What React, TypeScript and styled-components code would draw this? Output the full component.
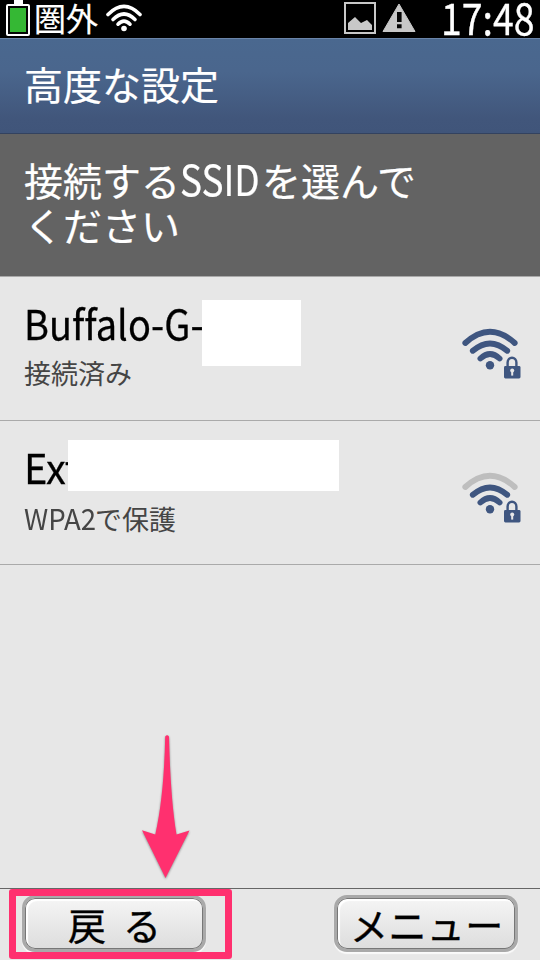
import React from 'react';
import styled, { createGlobalStyle } from 'styled-components';

const Global = createGlobalStyle`
  * { box-sizing: border-box; }
  html, body { margin: 0; padding: 0; }
  body {
    background: #e7e7e7;
    font-family: 'Noto Sans CJK JP', 'Noto Sans', sans-serif;
    font-variant-ligatures: none;
    overflow: hidden;
  }
`;

const Screen = styled.div`
  position: relative;
  display: flex;
  flex-direction: column;
  width: 540px;
  height: 960px;
  overflow: hidden;
  background: #e7e7e7;
`;

const StatusBar = styled.div`
  display: flex;
  flex: none;
  justify-content: space-between;
  height: 38px;
  padding: 0 4px 0 6px;
  background: #000;
  color: #fff;
  svg { display: block; flex: none; }
`;

const StatusGroup = styled.div`
  display: flex;
  height: 38px;
`;

const Carrier = styled.span`
  width: 72px;
  padding-left: 4px;
  font-size: 32px;
  line-height: 34px;
  white-space: nowrap;
  -webkit-text-stroke: 0.2px currentColor;
`;

/* Latin runs are larger and narrower than the kana beside them. */
const Condensed = styled.span<{ $size: number; $width: number; $scale: number }>`
  display: inline-block;
  width: ${(p) => p.$width}px;
  font-size: ${(p) => p.$size}px;
  line-height: inherit;
  white-space: nowrap;
  transform: scaleX(${(p) => p.$scale});
  transform-origin: 0 50%;
`;

const Clock = styled.div`
  margin-left: 25px;
  line-height: 33px;
  -webkit-text-stroke: 0.3px currentColor;
`;

const Header = styled.h1`
  flex: none;
  height: 96px;
  margin: 0;
  padding: 0 24px;
  border-top: 1px solid #6a84a8;
  border-bottom: 1px solid #33425f;
  background: linear-gradient(#4a688f, #4a668d 35%, #41567b 85%, #40557a);
  color: #fff;
  font-size: 39px;
  font-weight: 400;
  line-height: 89px;
  -webkit-text-stroke: 0.2px currentColor;
`;

const Prompt = styled.p`
  flex: none;
  height: 143px;
  margin: 0;
  padding: 21px 24px 0;
  border-bottom: 1px solid #a9a9a9;
  background: #636363;
  color: #fff;
  font-size: 39px;
  line-height: 46px;
  white-space: nowrap;
  -webkit-text-stroke: 0.2px currentColor;
`;

const PromptLine = styled.span`
  display: block;
  height: 46px;
`;

const NetworkList = styled.ul`
  flex: 1;
  margin: 0;
  padding: 0;
  list-style: none;
`;

const NetworkRow = styled.li`
  position: relative;
  display: flex;
  justify-content: space-between;
  height: 144px;
  padding: 21px 18px 0 24px;
  border-bottom: 1px solid #aaa;
`;

const NetworkName = styled.div`
  height: 48px;
  color: #000;
  line-height: 48px;
  -webkit-text-stroke: 0.3px currentColor;
`;

const NetworkState = styled.div`
  margin-top: 9px;
  color: #454545;
  font-size: 27px;
  line-height: 36px;
  white-space: nowrap;
`;

/* White block that hides part of the network name. */
const Redaction = styled.div<{ $x: number; $y: number; $w: number; $h: number }>`
  position: absolute;
  left: ${(p) => p.$x}px;
  top: ${(p) => p.$y}px;
  width: ${(p) => p.$w}px;
  height: ${(p) => p.$h}px;
  background: #fff;
`;

const SignalSvg = styled.svg`
  display: block;
  margin-top: 27px;
`;

const Footer = styled.div`
  display: flex;
  flex: none;
  justify-content: space-between;
  height: 72px;
  padding: 6px 22px 0 22px;
  border-top: 1px solid #666;
`;

const SoftKey = styled.button<{ $spacing: number; $indent: number }>`
  width: 184px;
  height: 57px;
  margin: 0;
  padding: 0 0 0 ${(p) => p.$indent}px;
  border: 3px solid #a9a9a9;
  border-radius: 13px;
  background: linear-gradient(#f5f5f5, #ddd) padding-box, #a9a9a9;
  box-shadow: inset 0 0 0 1px #777, inset 2px 2px 1px 1px #fff, 0 2px 1px #fafafa;
  color: #000;
  font-family: inherit;
  font-size: 38px;
  letter-spacing: ${(p) => p.$spacing}px;
  line-height: 48px;
  text-align: left;
  white-space: nowrap;
  -webkit-text-stroke: 0.4px currentColor;
`;

const Highlight = styled.div`
  position: absolute;
  left: 9px;
  top: 889px;
  width: 223px;
  height: 70px;
  border: 7px solid #ff306f;
  border-radius: 3px;
`;

const Pointer = styled.svg`
  position: absolute;
  left: 136px;
  top: 728px;
  filter: drop-shadow(0 1px 1px rgba(0, 0, 0, 0.4));
`;

const Signal = ({ outer }: { outer: string }) => (
  <SignalSvg width="62" height="54" viewBox="0 0 62 54" fill="none">
    <g stroke="#3f5680" strokeWidth="5.8" strokeLinecap="round">
      <path d="M5.3 18 Q30 -4.5 54.7 18" stroke={outer} />
      <path d="M12.8 25.8 Q30 11 47.2 25.8" />
      <path d="M20.4 33.5 Q30 24.5 39.6 33.5" />
    </g>
    <circle cx="30" cy="40.2" r="4.2" fill="#3f5680" />
    <path d="M47.6 42 V37.5 a4.4 4.7 0 0 1 8.8 0 V42" stroke="#3f5680" strokeWidth="2.4" />
    <rect x="44" y="41" width="16.5" height="12.4" rx="1.4" fill="#3f5680" />
    <circle cx="52.2" cy="45.5" r="2" fill="#e7e7e7" />
    <path d="M51.2 46h2v4.6h-2z" fill="#e7e7e7" />
  </SignalSvg>
);

export default function App() {
  return (
    <>
      <Global />
      <Screen>
        <StatusBar>
          <StatusGroup>
            <svg width="24" height="38" viewBox="0 0 24 38">
              <path d="M8 0h9v4h5a2 2 0 0 1 2 2v28a2 2 0 0 1-2 2H2a2 2 0 0 1-2-2V6a2 2 0 0 1 2-2h6z" fill="#fff" />
              <path d="M2 6h20v28H2z" fill="#050505" />
              <path d="M4 8h16v24H4z" fill="#35b834" />
            </svg>
            <Carrier>圏外</Carrier>
            <svg width="42" height="38" viewBox="102 0 42 38" fill="none">
              <g stroke="#fff" strokeWidth="3.6" strokeLinecap="round">
                <path d="M108 14.5Q124 -1.5 140 14.5" />
                <path d="M113 19.5Q124 8.5 135 19.5" />
                <path d="M118 24.2Q124 18 130 24.2" />
              </g>
              <circle cx="124" cy="28.5" r="2.8" fill="#fff" />
            </svg>
          </StatusGroup>
          <StatusGroup>
            <svg width="72" height="38" viewBox="344 0 72 38">
              <path d="M345 3h30v30h-30z" fill="none" stroke="#c8c8c8" strokeWidth="2" />
              <path d="M348 30v-7l7-6 6 6 6-3 5 5v5z" fill="#c8c8c8" />
              <path d="M399 4l16 27.5h-32z" fill="#c8c8c8" stroke="#c8c8c8" strokeLinejoin="round" />
              <path d="M397 12h4.6v10H397zM397 24.2h4.6v4H397z" fill="#050505" />
            </svg>
            <Clock>
              <Condensed $size={43} $width={95} $scale={0.87}>17:48</Condensed>
            </Clock>
          </StatusGroup>
        </StatusBar>
        <Header>高度な設定</Header>
        <Prompt>
          <PromptLine>
            接続する
            <Condensed $size={42} $width={82} $scale={0.88}>SSID</Condensed>
            を選んで
          </PromptLine>
          <PromptLine>ください</PromptLine>
        </Prompt>
        <NetworkList>
          <NetworkRow>
            <div>
              <NetworkName>
                <Condensed $size={41} $width={180} $scale={0.925}>Buffalo-G-</Condensed>
              </NetworkName>
              <NetworkState>接続済み</NetworkState>
            </div>
            <Redaction $x={202} $y={23} $w={99} $h={66} />
            <Signal outer="#3f5680" />
          </NetworkRow>
          <NetworkRow>
            <div>
              <NetworkName>
                <Condensed $size={41} $width={60} $scale={0.97}>Ext</Condensed>
              </NetworkName>
              <NetworkState>
                <Condensed $size={29} $width={71} $scale={0.95}>WPA2</Condensed>
                で保護
              </NetworkState>
            </div>
            <Redaction $x={68} $y={19} $w={271} $h={51} />
            <Signal outer="#bebebe" />
          </NetworkRow>
        </NetworkList>
        <Footer>
          <SoftKey $spacing={17} $indent={43}>戻る</SoftKey>
          <SoftKey $spacing={0.4} $indent={13}>メニュー</SoftKey>
        </Footer>
        <Highlight />
        <Pointer width="60" height="160" viewBox="136 728 60 160">
          <path d="M165.2 736.5Q167.1 733.8 169 736.5C170 775 172 807 176.5 834.5L189.5 830.5L165.5 878L142 830.2L155.3 834.5C162 805 164.5 770 165.2 736.5Z" fill="#ff306f" />
        </Pointer>
      </Screen>
    </>
  );
}
